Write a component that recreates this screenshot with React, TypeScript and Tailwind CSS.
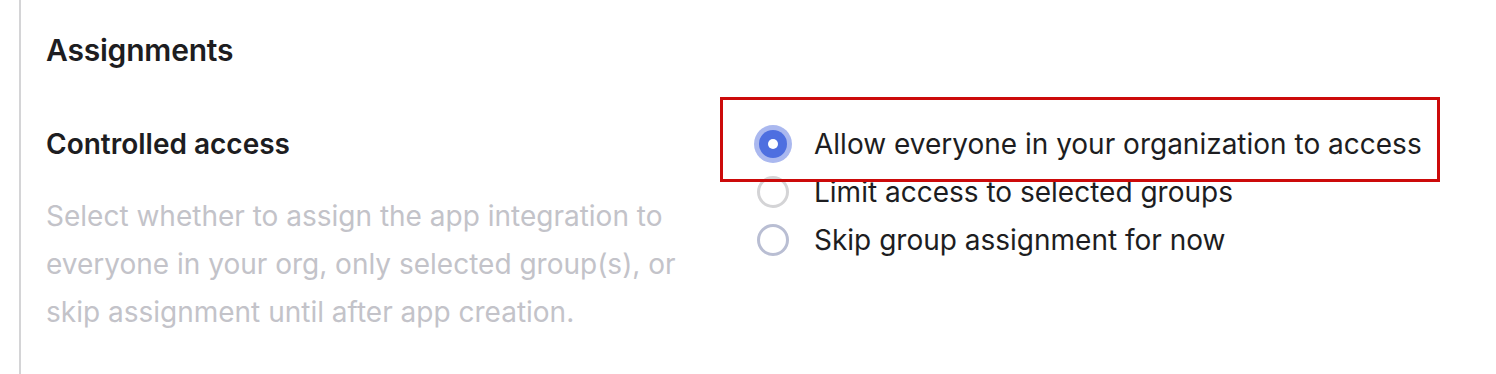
import React from 'react';

const options = [
  { label: 'Allow everyone in your organization to access', state: 'checked' },
  { label: 'Limit access to selected groups', state: 'idle' },
  { label: 'Skip group assignment for now', state: 'hover' },
];

function Radio({ state }: { state: string }) {
  if (state === 'checked') {
    return (
      <span className="flex h-[38px] w-[38px] items-center justify-center rounded-full bg-[#aab8ef]">
        <span className="flex h-[28px] w-[28px] items-center justify-center rounded-full bg-[#4e6fe0]">
          <span className="h-[10px] w-[10px] rounded-full bg-white" />
        </span>
      </span>
    );
  }
  return (
    <span className="flex h-[38px] w-[38px] items-center justify-center">
      <span
        className={
          state === 'hover'
            ? 'h-[32px] w-[32px] rounded-full border-[3px] border-[#b9bed3] bg-white'
            : 'h-[32px] w-[32px] rounded-full border-[3px] border-[#d4d4d6] bg-white'
        }
      />
    </span>
  );
}

export default function App() {
  return (
    <div className="h-[374px] w-[1496px] bg-white font-['Inter',sans-serif] text-[#1d1d21]">
      <div className="ml-[19px] h-full border-l-2 border-[#d4d4d6] pl-[25px]">
        <h2 className="pt-[30px] text-[30px] font-semibold leading-[40px] tracking-[-0.2px]">Assignments</h2>

        <div className="mt-[50px] flex items-start">
          <div className="w-[708px] shrink-0 pt-[4px]">
            <h3 className="text-[28px] font-semibold leading-[40px]">Controlled access</h3>
            <p className="mt-[28px] w-[660px] text-[28px] leading-[48px] text-[#c3c3c9]">
              Select whether to assign the app integration to everyone in your org, only selected
              group(s), or skip assignment until after app creation.
            </p>
          </div>

          <div className="relative">
            <div className="flex flex-col">
              {options.map((o) => (
                <label key={o.label} className="flex h-[48px] items-center gap-[22px]">
                  <Radio state={o.state} />
                  <span className="text-[28px] leading-[40px]">{o.label}</span>
                </label>
              ))}
            </div>
            <div className="absolute left-[-34px] top-[-23px] h-[85px] w-[720px] border-[3px] border-[#cc0a0a]" />
          </div>
        </div>
      </div>
    </div>
  );
}
